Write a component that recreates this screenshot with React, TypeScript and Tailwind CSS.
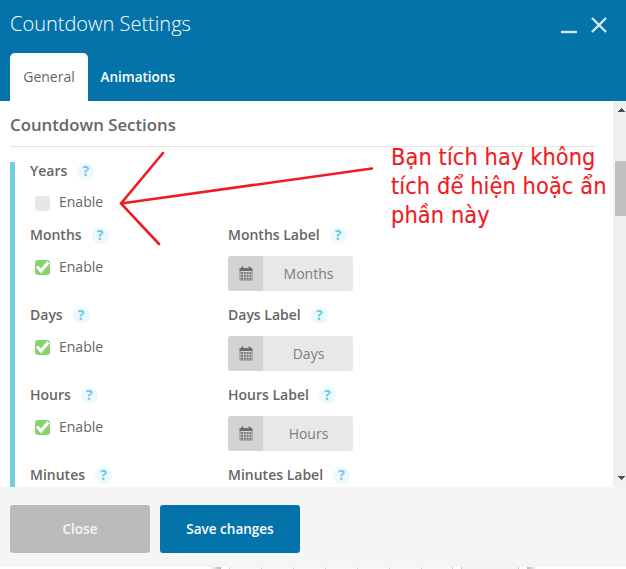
import React from 'react';

interface Section {
  name: string;
  enabled: boolean;
  hasLabel: boolean;
}

const sections: Section[] = [
  { name: 'Years', enabled: false, hasLabel: false },
  { name: 'Months', enabled: true, hasLabel: true },
  { name: 'Days', enabled: true, hasLabel: true },
  { name: 'Hours', enabled: true, hasLabel: true },
  { name: 'Minutes', enabled: true, hasLabel: true },
];

const toolbarCells = [31, 31, 31, 31, 31, 31, 30];

function FieldTitle({ text }: { text: string }) {
  return (
    <div className="flex h-[18px] items-center whitespace-nowrap text-[14px] font-semibold text-[#666]">
      <span className="pb-0.5">{text}</span>
      <span className="ml-[10px] flex h-[17px] w-[17px] items-center justify-center rounded-full bg-[#ebf8fd] text-[14px] leading-none font-bold text-[#6dcadd]">
        ?
      </span>
    </div>
  );
}

function Checkbox({ checked }: { checked: boolean }) {
  if (!checked) {
    return <span className="mt-0.5 h-[15px] w-[15px] rounded-[3px] bg-[#e7e7e7]" />;
  }
  return (
    <span className="h-[15px] w-[15px] rounded-[3px] bg-[#88d272]">
      <svg width="15" height="15" viewBox="0 0 15 15" fill="none">
        <path d="M2 6.500 L6 10.800 L13.400 2.200" stroke="#fff" strokeWidth="3.2" />
      </svg>
    </span>
  );
}

function CalendarIcon() {
  return (
    <svg width="14" height="15" viewBox="0 0 14 15">
      <path fill="#6e6e6e" d="M.5 2h2V.5h2V2h5V.5h2V2h2v3H.5z" />
      <path fill="#858585" fillRule="evenodd" d="M.5 5h13v9.500H.5zM1.500 5v8.500h11V5z" />
      <path
        stroke="#777"
        strokeWidth="1.8"
        strokeDasharray="2 0.800"
        d="M2 7h10M2 9.750h10M2 12.500h10"
      />
    </svg>
  );
}

function LabelInput({ value }: { value: string }) {
  return (
    <div className="mt-3 flex h-[35px] w-[125px] overflow-hidden rounded-[3px] bg-[#e8e8e8] text-[14px] text-[#7c7e80]">
      <span className="flex w-[35px] items-center justify-center bg-[#d3d3d3]">
        <CalendarIcon />
      </span>
      <span className="flex flex-1 items-center justify-center pl-px">{value}</span>
    </div>
  );
}

function SectionRow({ section }: { section: Section }) {
  return (
    <div className={section.hasLabel ? 'flex h-20 shrink-0' : 'flex h-16 shrink-0'}>
      <div className="w-[198px]">
        <FieldTitle text={section.name} />
        <div
          className={
            section.hasLabel
              ? 'mt-4 flex h-[15px] items-center pl-[5px]'
              : 'mt-[15px] flex h-[15px] items-center pl-[5px]'
          }
        >
          <Checkbox checked={section.enabled} />
          <span className="ml-[9px] pb-0.5 text-[14px] text-[#666]">Enable</span>
        </div>
      </div>
      {section.hasLabel && (
        <div>
          <FieldTitle text={`${section.name} Label`} />
          <LabelInput value={section.name} />
        </div>
      )}
    </div>
  );
}

function Annotation() {
  return (
    <>
      <svg
        className="absolute left-0 top-0"
        width="626"
        height="569"
        fill="none"
        stroke="#ed1c24"
        strokeWidth="2.6"
        strokeLinecap="round"
      >
        <path d="M163 153 L121 203.5 L159 244 M121 203.5 L372 168.500" />
      </svg>
      <p className="absolute left-[391px] top-[142px] whitespace-nowrap font-['DejaVu_Sans_Condensed','DejaVu_Sans',sans-serif] text-[23.3px] leading-[29px] tracking-[0.1px] text-[#ed1c24] [-webkit-text-stroke:0.15px_#ed1c24]">
        Bạn tích hay không
        <br />
        tích để hiện hoặc ẩn
        <br />
        phần này
      </p>
    </>
  );
}

export default function App() {
  return (
    <div className="relative flex h-[569px] w-[626px] flex-col overflow-hidden bg-white font-['Open_Sans',sans-serif]">
      {/* Header */}
      <header className="flex h-[101px] shrink-0 flex-col justify-between bg-[#0473aa] pl-[10px] text-white">
        <div className="flex h-12 items-center justify-between pr-[18px]">
          <h1 className="text-[20px] font-light">Countdown Settings</h1>
          <svg width="48" height="20" viewBox="0 0 48 20" fill="none" stroke="#d5e9f2">
            <path d="M1 18h16" strokeWidth="2.4" />
            <path d="M32 4l14 14M46 4l-14 14" strokeWidth="2.4" />
          </svg>
        </div>
        <nav className="flex h-12 text-[14px]">
          <span className="flex w-[78px] items-center justify-center rounded-t-[5px] bg-white pb-0.5 text-[#666]">
            General
          </span>
          <span className="flex items-center pl-[12.5px] text-[13.5px] font-semibold">Animations</span>
        </nav>
      </header>

      {/* Body */}
      <div className="flex h-[386px] shrink-0 overflow-hidden">
        <main className="flex w-[613px] flex-col overflow-hidden pl-[10px]">
          <h2 className="flex h-[46px] w-[585px] shrink-0 items-center border-b border-[#e3e3e3] pt-[3px] text-[16.8px] font-semibold text-[#666]">
            Countdown Sections
          </h2>
          <div className="mt-[15px] flex flex-1 flex-col border-l-[5px] border-[#72cde0] pl-[15px]">
            {sections.map((section) => (
              <SectionRow key={section.name} section={section} />
            ))}
          </div>
        </main>

        {/* Scrollbar */}
        <div className="flex w-[13px] flex-col items-end justify-between bg-[#f0f0f0]">
          <svg width="13" height="60" viewBox="0 0 13 60" shapeRendering="crispEdges">
            <path d="M5 11h7L8.500 7z" fill="#505050" />
          </svg>
          <div className="mb-auto h-[55px] w-[11px] bg-[#c1c1c1]" />
          <svg width="13" height="15" viewBox="0 0 13 15" shapeRendering="crispEdges">
            <path d="M5 4h7L8.500 8z" fill="#505050" />
          </svg>
        </div>
      </div>

      {/* Footer */}
      <footer className="flex h-20 shrink-0 gap-[10px] bg-[#f5f5f5] pl-[10px] pt-[18px]">
        <button className="h-12 w-[140px] rounded-[3px] bg-[#bbb] text-[13.5px] font-semibold text-[#f5f5f5]">
          Close
        </button>
        <button className="h-12 w-[140px] rounded-[3px] bg-[#0473aa] text-[13.5px] font-semibold text-white">
          Save changes
        </button>
      </footer>

      {/* Top edge of the page showing below the dialog */}
      <div className="flex h-[2px] shrink-0 pl-[210px]">
        <span className="w-[11px] bg-linear-to-r from-white to-[#b5b5b5]" />
        <span className="w-2" />
        <span className="flex border-l border-[#d0d0d0]">
          {toolbarCells.map((width, index) => (
            <span key={index} className="border-r border-[#d0d0d0] bg-[#fafafa]" style={{ width: width + 1 }} />
          ))}
        </span>
        <span className="ml-2 w-[58px] border-x border-[#c0c0c0] bg-[#f5f5f5]" />
        <span className="ml-2 w-[10px] bg-linear-to-r from-[#b5b5b5] to-white" />
      </div>

      <Annotation />
    </div>
  );
}
